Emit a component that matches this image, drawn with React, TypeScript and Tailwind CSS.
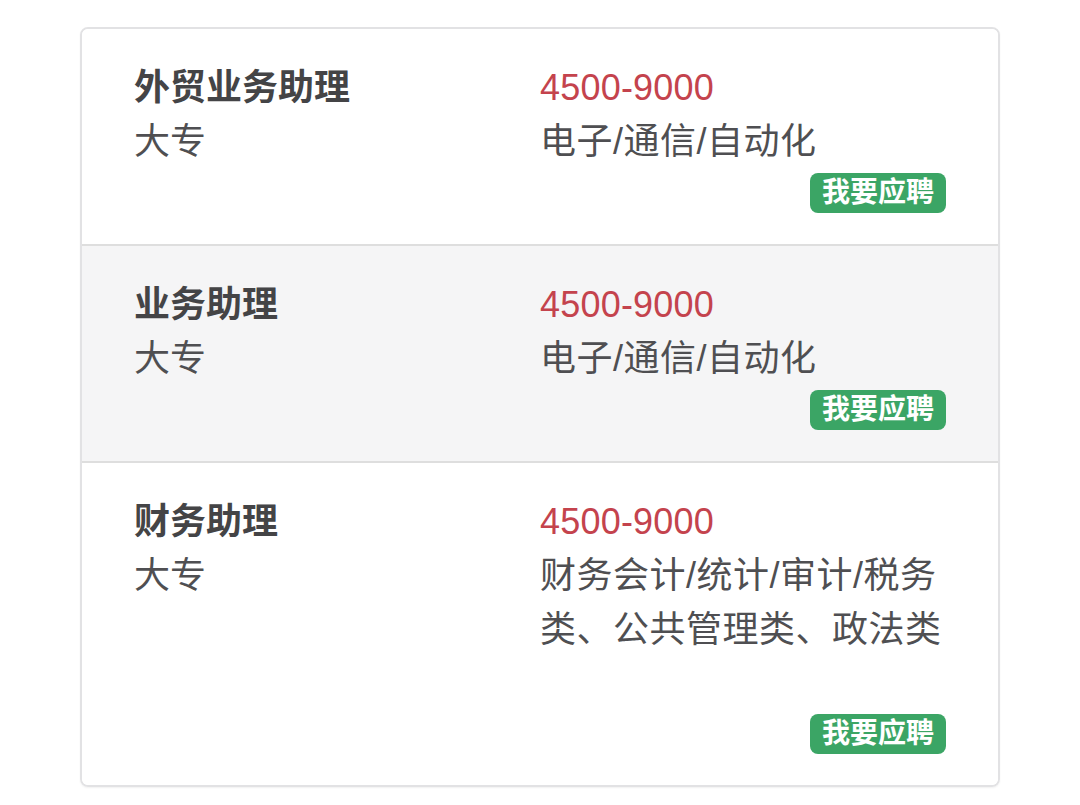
type Job = { title: string; edu: string; salary: string; major: string; extraGap?: boolean };

const jobs: Job[] = [
  { title: "外贸业务助理", edu: "大专", salary: "4500-9000", major: "电子/通信/自动化" },
  { title: "业务助理", edu: "大专", salary: "4500-9000", major: "电子/通信/自动化" },
  { title: "财务助理", edu: "大专", salary: "4500-9000", major: "财务会计/统计/审计/税务类、公共管理类、政法类", extraGap: true },
];

function JobRow({ job, shaded, first }: { job: Job; shaded: boolean; first: boolean }) {
  return (
    <div
      className={
        "flex pl-[52px] pr-[52px] pt-[32px] pb-[31px] " +
        (first ? "" : "border-t-2 border-[#dedede] ") +
        (shaded ? "bg-[#f5f5f6]" : "bg-white")
      }
    >
      <div className="w-[406px] shrink-0">
        <div className="text-[36px] leading-[54px] font-bold text-[#444446]">{job.title}</div>
        <div className="text-[36px] leading-[54px] text-[#4f4f52]">{job.edu}</div>
      </div>
      <div className="w-[406px] shrink-0 flex flex-col">
        <div className="text-[36px] leading-[54px] text-[#c4434d] tracking-[0.2px]">{job.salary}</div>
        <div className="text-[36px] leading-[54px] text-[#4f4f52] break-all tracking-[0.5px]">{job.major}</div>
        <div className={"flex justify-end " + (job.extraGap ? "mt-[57px]" : "mt-[4px]")}>
          <button className="h-[40px] px-[12px] rounded-[8px] bg-[#3ba565] text-white text-[28px] leading-[40px] font-bold">
            我要应聘
          </button>
        </div>
      </div>
    </div>
  );
}

export default function App() {
  return (
    <div
      className="w-[1080px] h-[805px] bg-white pt-[27px] pl-[80px]"
      style={{ fontFamily: '"Liberation Sans", "Noto Sans CJK SC", sans-serif' }}
    >
      <div className="w-[920px] border-2 border-[#e2e2e4] rounded-[8px] overflow-hidden shadow-[0_1px_2px_rgba(0,0,0,0.06)]">
        {jobs.map((job, i) => (
          <JobRow key={job.title} job={job} shaded={i === 1} first={i === 0} />
        ))}
      </div>
    </div>
  );
}
